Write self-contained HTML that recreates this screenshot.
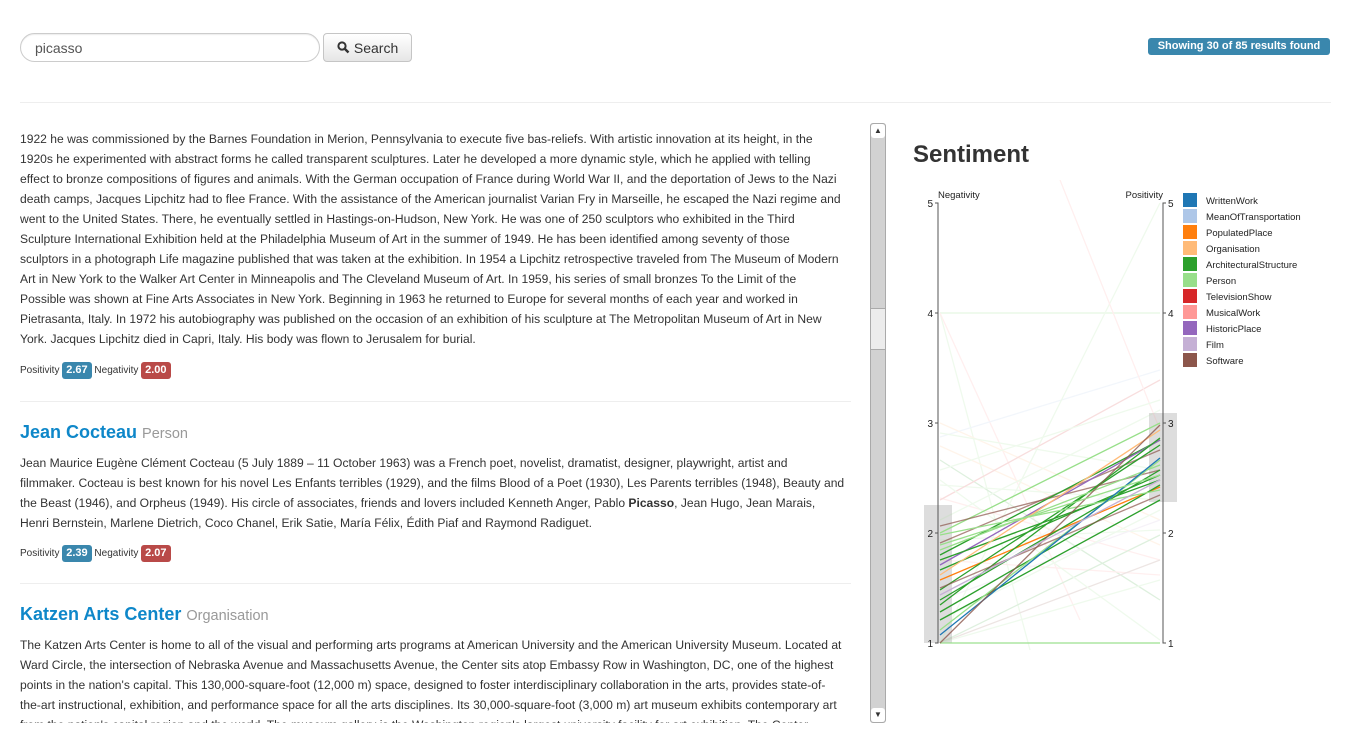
<!DOCTYPE html>
<html><head><meta charset="utf-8"><style>
*{margin:0;padding:0;box-sizing:border-box}
body{width:1351px;height:730px;overflow:hidden;background:#fff;font-family:"Liberation Sans",Arial,sans-serif;color:#333;position:relative}
.abs{position:absolute}
.inp{left:20px;top:33px;width:300px;height:29px;border:1px solid #ccc;border-radius:15px;font-size:14px;padding:6px 14px;color:#555;box-shadow:inset 0 1px 1px rgba(0,0,0,.075)}
.btn{left:323px;top:33px;width:89px;height:29px;border:1px solid #c5c5c5;border-radius:4px;background:linear-gradient(#fff,#e6e6e6);font-size:14px;padding:6px 0 0 13px;color:#333}
.hr{height:1px;background:#eee}
.badge{display:inline-block;color:#fff;font-weight:bold;border-radius:3px;padding:1px 4px;font-size:11px;line-height:15px}
.scroll{left:20px;top:108px;width:831px;height:615px;overflow:hidden}
.p{font-size:12.1px;line-height:20px;white-space:nowrap;color:#333}
.t{font-size:18px;font-weight:bold;color:#0e87c9;line-height:24px}
.t span{font-weight:normal;color:#999;font-size:14.5px}
.sm{font-size:10px;line-height:20px}
</style></head><body>
<div class="abs inp">picasso</div>
<div class="abs btn"><svg width="13" height="13" viewBox="0 0 13 13" style="vertical-align:-1px"><circle cx="5" cy="5" r="3.6" fill="none" stroke="#333" stroke-width="2"/><line x1="7.6" y1="7.6" x2="11.5" y2="11.5" stroke="#333" stroke-width="2.4"/></svg> Search</div>
<div class="abs badge" style="left:1148px;top:38px;background:#3a87ad;height:17px;width:182px;text-align:center">Showing 30 of 85 results found</div>
<div class="abs hr" style="left:20px;top:102px;width:1311px"></div>

<div class="abs scroll">
<div class="p" style="margin-top:21px">1922 he was commissioned by the Barnes Foundation in Merion, Pennsylvania to execute five bas-reliefs. With artistic innovation at its height, in the<br>1920s he experimented with abstract forms he called transparent sculptures. Later he developed a more dynamic style, which he applied with telling<br>effect to bronze compositions of figures and animals. With the German occupation of France during World War II, and the deportation of Jews to the Nazi<br>death camps, Jacques Lipchitz had to flee France. With the assistance of the American journalist Varian Fry in Marseille, he escaped the Nazi regime and<br>went to the United States. There, he eventually settled in Hastings-on-Hudson, New York. He was one of 250 sculptors who exhibited in the Third<br>Sculpture International Exhibition held at the Philadelphia Museum of Art in the summer of 1949. He has been identified among seventy of those<br>sculptors in a photograph Life magazine published that was taken at the exhibition. In 1954 a Lipchitz retrospective traveled from The Museum of Modern<br>Art in New York to the Walker Art Center in Minneapolis and The Cleveland Museum of Art. In 1959, his series of small bronzes To the Limit of the<br>Possible was shown at Fine Arts Associates in New York. Beginning in 1963 he returned to Europe for several months of each year and worked in<br>Pietrasanta, Italy. In 1972 his autobiography was published on the occasion of an exhibition of his sculpture at The Metropolitan Museum of Art in New<br>York. Jacques Lipchitz died in Capri, Italy. His body was flown to Jerusalem for burial.</div>
<div class="sm" style="margin-top:12px">Positivity <span class="badge" style="background:#3a87ad">2.67</span> Negativity <span class="badge" style="background:#b94a48">2.00</span></div>
<div class="hr" style="margin-top:20px"></div>
<div class="t" style="margin-top:18px">Jean Cocteau <span>Person</span></div>
<div class="p" style="margin-top:7px">Jean Maurice Eugène Clément Cocteau (5 July 1889 – 11 October 1963) was a French poet, novelist, dramatist, designer, playwright, artist and<br>filmmaker. Cocteau is best known for his novel Les Enfants terribles (1929), and the films Blood of a Poet (1930), Les Parents terribles (1948), Beauty and<br>the Beast (1946), and Orpheus (1949). His circle of associates, friends and lovers included Kenneth Anger, Pablo <b>Picasso</b>, Jean Hugo, Jean Marais,<br>Henri Bernstein, Marlene Dietrich, Coco Chanel, Erik Satie, María Félix, Édith Piaf and Raymond Radiguet.</div>
<div class="sm" style="margin-top:11px">Positivity <span class="badge" style="background:#3a87ad">2.39</span> Negativity <span class="badge" style="background:#b94a48">2.07</span></div>
<div class="hr" style="margin-top:19px"></div>
<div class="t" style="margin-top:18px">Katzen Arts Center <span>Organisation</span></div>
<div class="p" style="margin-top:7px">The Katzen Arts Center is home to all of the visual and performing arts programs at American University and the American University Museum. Located at<br>Ward Circle, the intersection of Nebraska Avenue and Massachusetts Avenue, the Center sits atop Embassy Row in Washington, DC, one of the highest<br>points in the nation's capital. This 130,000-square-foot (12,000 m) space, designed to foster interdisciplinary collaboration in the arts, provides state-of-<br>the-art instructional, exhibition, and performance space for all the arts disciplines. Its 30,000-square-foot (3,000 m) art museum exhibits contemporary art<br>from the nation's capital region and the world. The museum gallery is the Washington region's largest university facility for art exhibition. The Center</div>
</div>

<!-- scrollbar -->
<div class="abs" style="left:870px;top:123px;width:16px;height:600px;background:#d2d2d2;border:1px solid #aaa;border-radius:3px"></div>
<div class="abs" style="left:871px;top:124px;width:14px;height:14px;background:#fff;border-radius:3px;font-size:8px;text-align:center;line-height:14px">▲</div>
<div class="abs" style="left:871px;top:708px;width:14px;height:14px;background:#fff;border-radius:3px;font-size:8px;text-align:center;line-height:14px">▼</div>
<div class="abs" style="left:871px;top:308px;width:14px;height:42px;background:#ececec;border-top:1px solid #aaa;border-bottom:1px solid #aaa"></div>

<div class="abs" style="left:913px;top:141px;font-size:24px;font-weight:bold;color:#333">Sentiment</div>

<svg class="abs" style="left:900px;top:180px" width="451" height="480" viewBox="900 180 451 480" font-family="Liberation Sans,Arial,sans-serif" font-size="10">
<rect x="924" y="505" width="28" height="138" fill="#ddd"/>
<rect x="1149" y="413" width="28" height="89" fill="#ddd"/>
<g stroke-width="1.3" fill="none">
<g opacity="0.15">
<line x1="940" y1="313" x2="1160" y2="313" stroke="#98df8a" stroke-width="2"/>
<line x1="940" y1="313" x2="1030" y2="650" stroke="#98df8a"/>
<line x1="940" y1="313" x2="1080" y2="620" stroke="#ff9896"/>
<line x1="940" y1="437" x2="1160" y2="370" stroke="#aec7e8"/>
<line x1="940" y1="423" x2="1160" y2="520" stroke="#ffbb78"/>
<line x1="940" y1="433" x2="1160" y2="470" stroke="#98df8a"/>
<line x1="940" y1="446" x2="1160" y2="545" stroke="#ffbb78"/>
<line x1="940" y1="460" x2="1160" y2="600" stroke="#2ca02c"/>
<line x1="940" y1="485" x2="1160" y2="500" stroke="#98df8a"/>
<line x1="940" y1="498" x2="1160" y2="560" stroke="#ff9896"/>
<line x1="940" y1="540" x2="1160" y2="530" stroke="#98df8a"/>
<line x1="940" y1="560" x2="1160" y2="575" stroke="#ff9896"/>
<line x1="940" y1="600" x2="1160" y2="520" stroke="#c5b0d5"/>
<line x1="940" y1="620" x2="1160" y2="510" stroke="#98df8a"/>
<line x1="940" y1="643" x2="1160" y2="560" stroke="#8c564b"/>
<line x1="940" y1="643" x2="1160" y2="535" stroke="#2ca02c"/>
<line x1="940" y1="643" x2="1160" y2="580" stroke="#98df8a"/>
<line x1="940" y1="643" x2="1160" y2="203" stroke="#98df8a"/>
<line x1="940" y1="500" x2="1160" y2="380" stroke="#d62728"/>
<line x1="940" y1="520" x2="1160" y2="410" stroke="#98df8a"/>
<line x1="1060" y1="180" x2="1160" y2="430" stroke="#ff9896"/>
<line x1="940" y1="600" x2="1160" y2="460" stroke="#aec7e8"/>
<line x1="940" y1="480" x2="1160" y2="640" stroke="#98df8a"/>
<line x1="940" y1="470" x2="1160" y2="400" stroke="#98df8a"/>
</g>
<line x1="940" y1="643" x2="1160" y2="643" stroke="#98df8a" stroke-width="2" opacity="0.6"/>
<line x1="940" y1="533" x2="1160" y2="423" stroke="#98df8a"/>
<line x1="940" y1="526" x2="1160" y2="470" stroke="#8c564b" opacity="0.7"/>
<line x1="940" y1="543" x2="1160" y2="450" stroke="#8c564b" opacity="0.7"/>
<line x1="940" y1="555" x2="1160" y2="440" stroke="#2ca02c"/>
<line x1="940" y1="565" x2="1160" y2="440" stroke="#9467bd"/>
<line x1="940" y1="580" x2="1160" y2="487" stroke="#ff7f0e"/>
<line x1="940" y1="560" x2="1160" y2="480" stroke="#2ca02c"/>
<line x1="940" y1="570" x2="1160" y2="475" stroke="#2ca02c"/>
<line x1="940" y1="590" x2="1160" y2="445" stroke="#2ca02c"/>
<line x1="940" y1="600" x2="1160" y2="470" stroke="#2ca02c"/>
<line x1="940" y1="605" x2="1160" y2="438" stroke="#2ca02c"/>
<line x1="940" y1="612" x2="1160" y2="485" stroke="#2ca02c"/>
<line x1="940" y1="620" x2="1160" y2="500" stroke="#2ca02c"/>
<line x1="940" y1="630" x2="1160" y2="460" stroke="#98df8a"/>
<line x1="940" y1="535" x2="1160" y2="490" stroke="#98df8a"/>
<line x1="940" y1="550" x2="1160" y2="465" stroke="#98df8a"/>
<line x1="940" y1="575" x2="1160" y2="430" stroke="#ffbb78"/>
<line x1="940" y1="588" x2="1160" y2="495" stroke="#8c564b" opacity="0.7"/>
<line x1="940" y1="635" x2="1160" y2="458" stroke="#1f77b4"/>
<line x1="940" y1="643" x2="1160" y2="425" stroke="#8c564b" opacity="0.8"/>
<line x1="940" y1="595" x2="1160" y2="480" stroke="#c5b0d5"/>
<line x1="940" y1="545" x2="1160" y2="475" stroke="#98df8a"/>
</g>
<g stroke="#555" fill="none">
<path d="M935 203H938V643H935M938 313H935M938 423H935M938 533H935"/>
<path d="M1166 203H1163V643H1166M1163 313H1166M1163 423H1166M1163 533H1166"/>
</g>
<g fill="#222" text-anchor="end">
<text x="933" y="207">5</text><text x="933" y="317">4</text><text x="933" y="427">3</text><text x="933" y="537">2</text><text x="933" y="647">1</text>
</g>
<g fill="#222">
<text x="1168" y="207">5</text><text x="1168" y="317">4</text><text x="1168" y="427">3</text><text x="1168" y="537">2</text><text x="1168" y="647">1</text>
<text x="938" y="198" font-size="9.5">Negativity</text>
<text x="1163" y="198" font-size="9.5" text-anchor="end">Positivity</text>
</g>
<g font-size="9.5" fill="#222">
<rect x="1183" y="193" width="14" height="14" fill="#1f77b4"/><text x="1206" y="204">WrittenWork</text>
<rect x="1183" y="209" width="14" height="14" fill="#aec7e8"/><text x="1206" y="220">MeanOfTransportation</text>
<rect x="1183" y="225" width="14" height="14" fill="#ff7f0e"/><text x="1206" y="236">PopulatedPlace</text>
<rect x="1183" y="241" width="14" height="14" fill="#ffbb78"/><text x="1206" y="252">Organisation</text>
<rect x="1183" y="257" width="14" height="14" fill="#2ca02c"/><text x="1206" y="268">ArchitecturalStructure</text>
<rect x="1183" y="273" width="14" height="14" fill="#98df8a"/><text x="1206" y="284">Person</text>
<rect x="1183" y="289" width="14" height="14" fill="#d62728"/><text x="1206" y="300">TelevisionShow</text>
<rect x="1183" y="305" width="14" height="14" fill="#ff9896"/><text x="1206" y="316">MusicalWork</text>
<rect x="1183" y="321" width="14" height="14" fill="#9467bd"/><text x="1206" y="332">HistoricPlace</text>
<rect x="1183" y="337" width="14" height="14" fill="#c5b0d5"/><text x="1206" y="348">Film</text>
<rect x="1183" y="353" width="14" height="14" fill="#8c564b"/><text x="1206" y="364">Software</text>
</g>
</svg>
</body></html>
